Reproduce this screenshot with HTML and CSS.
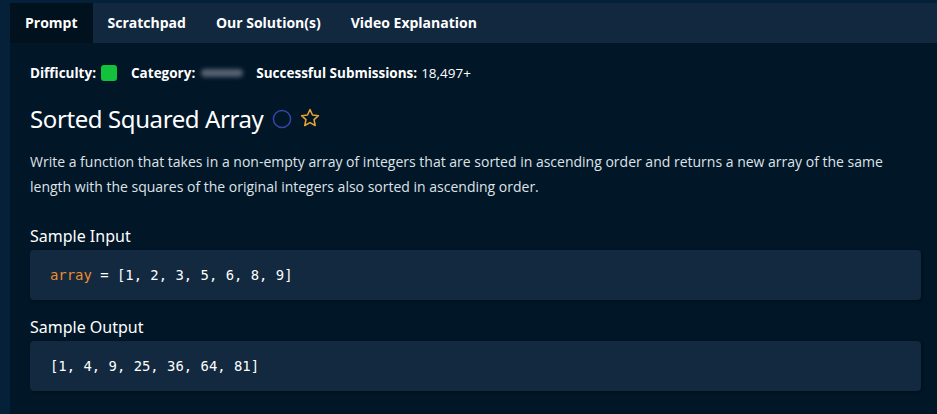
FILE: index.html
```html
<!DOCTYPE html>
<html>
<head>
<meta charset="utf-8">
<link rel="stylesheet" href="styles.css">
</head>
<body>
<div class="shell">
  <div class="panel">
    <nav class="tabs">
      <div class="tab active">Prompt</div>
      <div class="tab">Scratchpad</div>
      <div class="tab">Our Solution(s)</div>
      <div class="tab">Video Explanation</div>
    </nav>
    <main class="content">
      <div class="meta">
        <span class="label">Difficulty:</span>
        <span class="diff"></span>
        <span class="label cat">Category:</span>
        <span class="blur"></span>
        <span class="label subs">Successful Submissions:</span>
        <span class="val">18,497+</span>
      </div>
      <h1 class="title">Sorted Squared Array
        <svg class="ico" width="20" height="20" viewBox="0 0 20 20"><circle cx="10" cy="10" r="8.6" fill="none" stroke="#3346a8" stroke-width="1.5"/></svg>
        <svg class="ico star" width="22" height="22" viewBox="0 0 24 24"><path d="M12 2.8l2.75 5.9 6.45.75-4.8 4.4 1.3 6.35L12 17l-5.7 3.2 1.3-6.35-4.8-4.4 6.45-.75z" fill="none" stroke="#e6a231" stroke-width="1.7" stroke-linejoin="round"/></svg>
      </h1>
      <p class="desc">Write a function that takes in a non-empty array of integers that are sorted in ascending order and returns a new array of the same length with the squares of the original integers also sorted in ascending order.</p>
      <h3 class="sub">Sample Input</h3>
      <pre class="code"><span class="var">array</span> = [1, 2, 3, 5, 6, 8, 9]</pre>
      <h3 class="sub">Sample Output</h3>
      <pre class="code">[1, 4, 9, 25, 36, 64, 81]</pre>
    </main>
  </div>
</div>
</body>
</html>
```
FILE: styles.css
```css
html, body {
  margin: 0;
  padding: 0;
  background: #011627;
}
body {
  font-family: "Open Sans", "Noto Sans", sans-serif;
  color: #fff;
}
.shell {
  background: #05213a;
  padding: 3px 0 0 10px;
  height: 411px;
  overflow: hidden;
}
.panel {
  background: #011627;
  height: 100%;
}
.tabs {
  display: flex;
  background: #12283f;
  height: 40px;
}
.tab {
  font-weight: 700;
  font-size: 14px;
  padding: 0 15px;
  line-height: 40px;
  color: #fff;
}
.tab.active {
  background: #01111e;
}
.content {
  padding: 16px 16px 0 20px;
}
.meta {
  display: flex;
  align-items: center;
  font-size: 13.5px;
  height: 28px;
}
.label { font-weight: 700; }
.diff {
  width: 16px;
  height: 16px;
  border-radius: 3px;
  background: #13c23c;
  margin-left: 5px;
}
.cat { margin-left: 14px; }
.blur {
  width: 42px;
  height: 8px;
  border-radius: 4px;
  background: #556170;
  filter: blur(2px);
  margin-left: 6px;
}
.subs { margin-left: 13px; }
.val { margin-left: 4px; }
.title {
  margin: 16px 0 0;
  font-family: "Noto Sans", "Open Sans", sans-serif;
  font-weight: 400;
  font-size: 24px;
  line-height: 32px;
  display: flex;
  align-items: center;
  letter-spacing: -0.4px;
}
.ico { margin-left: 9px; }
.star { margin-left: 7px; margin-top: -2px; }
.desc {
  margin: 13.5px 0 0;
  font-size: 14px;
  line-height: 25px;
  color: #dfe3e8;
  font-stretch: 94%;
  max-width: 891px;
}
.sub {
  margin: 26.5px 0 0;
  font-family: "Noto Sans", "Open Sans", sans-serif;
  font-weight: 400;
  font-size: 16px;
  line-height: 22px;
  color: #fff;
}
.code {
  margin: 3px 0 0;
  background: #12293f;
  border-radius: 4px;
  height: 50px;
  line-height: 50px;
  padding: 0 20px;
  font-family: "DejaVu Sans Mono", monospace;
  font-size: 13.9px;
  color: #fff;
  box-shadow: 1px 1px 3px rgba(0,0,0,0.35);
}
.code + .sub { margin-top: 16px; }
.var { color: #f08d2b; }
```
